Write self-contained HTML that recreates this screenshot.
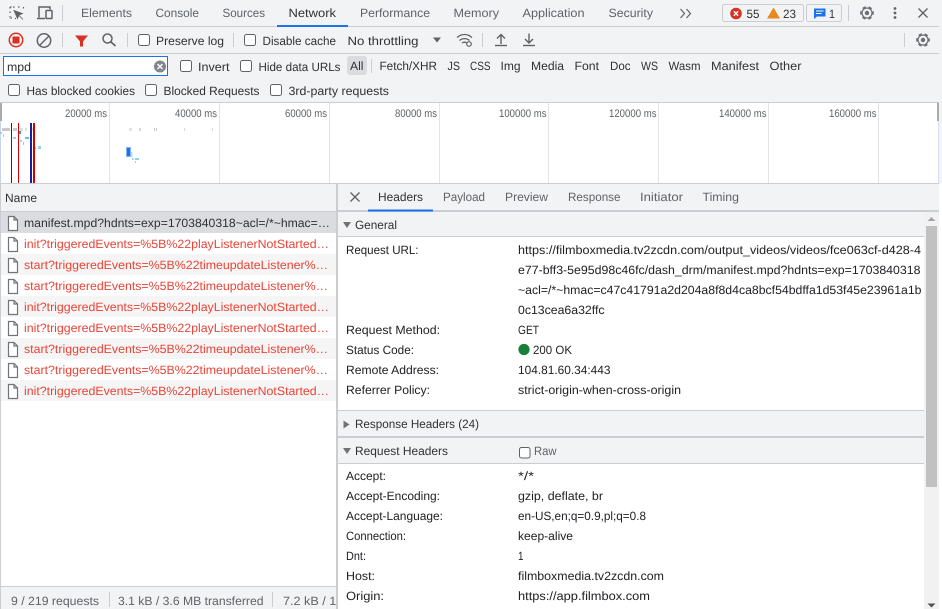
<!DOCTYPE html>
<html><head><meta charset="utf-8"><title>Network</title>
<style>
html,body{margin:0;padding:0;background:#fff;width:942px;height:609px;overflow:hidden}
svg{display:block}
text{font-family:"Liberation Sans",sans-serif;font-size:12px;fill:#3c4043;white-space:pre;text-rendering:geometricPrecision}
.t{fill:#5f6368}
.a{fill:#202124}
.k{fill:#303134}
.r{fill:#ea4335}
.o{font-size:11px;fill:#5f6368}
.cb{fill:#fff;stroke:#5f6368;stroke-width:1}
.ln{stroke:#cacdd1;stroke-width:1}
.ic{fill:none;stroke:#5f6368;stroke-width:1.5}
</style></head><body>
<svg width="942" height="609" viewBox="0 0 942 609" xmlns="http://www.w3.org/2000/svg">
<defs>
<g id="gear"><circle r="5" fill="none" stroke="#6a6e73" stroke-width="1.200"/><circle r="6.100" fill="none" stroke="#6a6e73" stroke-width="1.500" stroke-dasharray="3.400 3" transform="rotate(-16)"/><circle r="2.200" fill="#6a6e73"/></g>
<path id="file" d="M8.500 1.500h5.500l3.500 3.500v10.500h-9z M14 1.500v3.500h3.500" stroke="#70757a" stroke-width="1.200" fill="#fff"/>
<clipPath id="fc"><rect x="0" y="587" width="336" height="22"/></clipPath>
</defs>

<rect width="942" height="184" fill="#f1f3f4"/>
<rect x="939" y="184" width="3" height="425" fill="#fff"/>

<!-- top tab bar -->
<line x1="0" y1="26.500" x2="939" y2="26.500" class="ln"/>
<rect x="277" y="25" width="71" height="2" fill="#1a73e8"/>
<path d="M10 7h1.500M13 7h2M18 7h2.500M23.500 7v1.500M10 7v2M10 11.500v2M10 16v2h2M15 18.500h1" stroke="#5f6368" stroke-width="1.200" fill="none" stroke-dasharray="1.500 1"/>
<path d="M14 10.500l8.500 3-3.500 1.500-1.500 3.500zM18.500 15l4.500 4.500" fill="#5f6368" stroke="#5f6368" stroke-width=".8"/>
<path d="M37 18.500h8M39 17.500v-10.500h11v2.500" class="ic" stroke-width="1.300"/>
<rect x="46" y="10.500" width="6" height="8" rx=".8" class="ic" stroke-width="1.300"/>
<line x1="62.500" y1="5" x2="62.500" y2="21" class="ln"/>
<text x="81" y="17" class="t" textLength="51" lengthAdjust="spacingAndGlyphs">Elements</text>
<text x="155.500" y="17" class="t" textLength="43.500" lengthAdjust="spacingAndGlyphs">Console</text>
<text x="222.500" y="17" class="t" textLength="42.500" lengthAdjust="spacingAndGlyphs">Sources</text>
<text x="288.500" y="17" class="k" textLength="47.500" lengthAdjust="spacingAndGlyphs">Network</text>
<text x="360" y="17" class="t" textLength="70" lengthAdjust="spacingAndGlyphs">Performance</text>
<text x="453.500" y="17" class="t" textLength="45.500" lengthAdjust="spacingAndGlyphs">Memory</text>
<text x="522.500" y="17" class="t" textLength="62" lengthAdjust="spacingAndGlyphs">Application</text>
<text x="608.500" y="17" class="t" textLength="44.500" lengthAdjust="spacingAndGlyphs">Security</text>
<path d="M680.500 9l4 4.500-4 4.500M686.500 9l4 4.500-4 4.500" fill="none" stroke="#5f6368" stroke-width="1.200"/>

<rect x="722.500" y="4.500" width="81" height="17" rx="2" fill="#f1f3f4" stroke="#cacdd1"/>
<circle cx="736" cy="13.500" r="5.800" fill="#d93025"/>
<path d="M733.800 11.300l4.400 4.400M738.200 11.300l-4.400 4.400" stroke="#fff" stroke-width="1.400"/>
<text x="746.500" y="18" class="k" textLength="13" lengthAdjust="spacingAndGlyphs">55</text>
<path d="M773.500 7.500l6.500 11h-13z" fill="#e8891c"/>
<text x="783" y="18" class="k" textLength="13" lengthAdjust="spacingAndGlyphs">23</text>
<rect x="806.500" y="4.500" width="35" height="17" rx="2" fill="#f1f3f4" stroke="#cacdd1"/>
<path d="M814 8.500h11.500v8h-8.500l-3 2.500z" fill="#1a73e8"/>
<path d="M816 11h7.500M816 13.500h5.500" stroke="#fff" stroke-width="1"/>
<text x="829" y="18" class="k" textLength="6" lengthAdjust="spacingAndGlyphs">1</text>
<line x1="848.500" y1="5" x2="848.500" y2="21" class="ln"/>
<use href="#gear" x="867" y="13"/>
<circle cx="895" cy="8.500" r="1.400" fill="#5f6368"/><circle cx="895" cy="13" r="1.400" fill="#5f6368"/><circle cx="895" cy="17.500" r="1.400" fill="#5f6368"/>
<path d="M918.500 8.500l9 9M927.500 8.500l-9 9" stroke="#5f6368" stroke-width="1.300"/>

<!-- toolbar -->
<line x1="0" y1="53.500" x2="939" y2="53.500" class="ln"/>
<circle cx="16" cy="40" r="6.700" fill="none" stroke="#d93025" stroke-width="1.500"/>
<rect x="12.500" y="36.500" width="7" height="7" rx="1" fill="#d93025"/>
<circle cx="44" cy="40.500" r="6.700" fill="none" stroke="#5f6368" stroke-width="1.500"/>
<line x1="39.500" y1="45.500" x2="49" y2="36" stroke="#5f6368" stroke-width="1.500"/>
<line x1="62.500" y1="33" x2="62.500" y2="47" class="ln"/>
<path d="M75 35.500h13l-5 6v5h-3v-5z" fill="#d93025"/>
<circle cx="107.500" cy="38.500" r="4.500" fill="none" stroke="#5f6368" stroke-width="1.500"/>
<line x1="111" y1="42" x2="115.500" y2="46" stroke="#5f6368" stroke-width="1.700"/>
<line x1="127.500" y1="33" x2="127.500" y2="47" class="ln"/>
<rect x="138.500" y="34.500" width="11" height="11" rx="2" class="cb"/>
<text x="156" y="45" class="k" textLength="68" lengthAdjust="spacingAndGlyphs">Preserve log</text>
<line x1="233.500" y1="33" x2="233.500" y2="47" class="ln"/>
<rect x="244.500" y="34.500" width="11" height="11" rx="2" class="cb"/>
<text x="262.500" y="45" class="k" textLength="73.500" lengthAdjust="spacingAndGlyphs">Disable cache</text>
<text x="347.500" y="45" class="k" textLength="71" lengthAdjust="spacingAndGlyphs">No throttling</text>
<path d="M433 37.500h8l-4 5z" fill="#5f6368"/>
<path d="M457 37.500c4.500-4 10.500-4 15 0M459.500 40.500c3-2.500 7-2.500 10 0M462 43c1.500-1 3.200-1 4.500-.2" fill="none" stroke="#5f6368" stroke-width="1.300"/>
<circle cx="469" cy="44" r="2.300" fill="none" stroke="#5f6368" stroke-width="1.200"/>
<line x1="482.500" y1="33" x2="482.500" y2="47" class="ln"/>
<path d="M501 44v-9M497 38.500l4-4 4 4" fill="none" stroke="#5f6368" stroke-width="1.400"/><line x1="495" y1="45.500" x2="507" y2="45.500" stroke="#5f6368" stroke-width="1.400"/>
<path d="M529 33.500v9M525 39l4 4 4-4" fill="none" stroke="#5f6368" stroke-width="1.400"/><line x1="523" y1="45.500" x2="535" y2="45.500" stroke="#5f6368" stroke-width="1.400"/>
<line x1="904.500" y1="33" x2="904.500" y2="47" class="ln"/>
<use href="#gear" x="923" y="40"/>

<!-- filter row -->
<rect x="3.500" y="56.500" width="164" height="19" fill="#fff" stroke="#1a73e8"/>
<text x="7" y="71" class="k" textLength="24" lengthAdjust="spacingAndGlyphs">mpd</text>
<circle cx="160" cy="66.500" r="6" fill="#80868b"/>
<path d="M157.500 64l5 5M162.500 64l-5 5" stroke="#fff" stroke-width="1.400"/>
<rect x="180.500" y="60.500" width="11" height="11" rx="2" class="cb"/>
<text x="198" y="71" class="k" textLength="31.500" lengthAdjust="spacingAndGlyphs">Invert</text>
<rect x="240.500" y="60.500" width="11" height="11" rx="2" class="cb"/>
<text x="258.500" y="71" class="k" textLength="82" lengthAdjust="spacingAndGlyphs">Hide data URLs</text>
<rect x="347" y="56" width="20" height="19" rx="3" fill="#dadce0"/>
<text x="350" y="70" class="k" textLength="13.500" lengthAdjust="spacingAndGlyphs">All</text>
<line x1="371.500" y1="59" x2="371.500" y2="73" class="ln"/>
<text x="379.500" y="70" class="k" textLength="57.500" lengthAdjust="spacingAndGlyphs">Fetch/XHR</text>
<text x="447.500" y="70" class="k" textLength="12.500" lengthAdjust="spacingAndGlyphs">JS</text>
<text x="470" y="70" class="k" textLength="20.500" lengthAdjust="spacingAndGlyphs">CSS</text>
<text x="500.500" y="70" class="k" textLength="20" lengthAdjust="spacingAndGlyphs">Img</text>
<text x="531" y="70" class="k" textLength="33" lengthAdjust="spacingAndGlyphs">Media</text>
<text x="574.500" y="70" class="k" textLength="24.500" lengthAdjust="spacingAndGlyphs">Font</text>
<text x="610" y="70" class="k" textLength="20.500" lengthAdjust="spacingAndGlyphs">Doc</text>
<text x="641" y="70" class="k" textLength="17" lengthAdjust="spacingAndGlyphs">WS</text>
<text x="668.500" y="70" class="k" textLength="32" lengthAdjust="spacingAndGlyphs">Wasm</text>
<text x="711" y="70" class="k" textLength="48" lengthAdjust="spacingAndGlyphs">Manifest</text>
<text x="769.500" y="70" class="k" textLength="32" lengthAdjust="spacingAndGlyphs">Other</text>

<!-- row 3 -->
<rect x="8.500" y="84.500" width="11" height="11" rx="2" class="cb"/>
<text x="26.500" y="95" class="k" textLength="108.500" lengthAdjust="spacingAndGlyphs">Has blocked cookies</text>
<rect x="145.500" y="84.500" width="11" height="11" rx="2" class="cb"/>
<text x="163.500" y="95" class="k" textLength="96" lengthAdjust="spacingAndGlyphs">Blocked Requests</text>
<rect x="270.500" y="84.500" width="11" height="11" rx="2" class="cb"/>
<text x="288.500" y="95" class="k" textLength="100.500" lengthAdjust="spacingAndGlyphs">3rd-party requests</text>
<line x1="0" y1="102.500" x2="939" y2="102.500" class="ln"/>

<!-- overview -->
<rect x="0" y="103" width="939" height="80" fill="#fff"/>
<g stroke="#e3e3e3" stroke-width="1">
<line x1="109.500" y1="103" x2="109.500" y2="183"/><line x1="219.500" y1="103" x2="219.500" y2="183"/><line x1="329.500" y1="103" x2="329.500" y2="183"/><line x1="439.500" y1="103" x2="439.500" y2="183"/><line x1="548.500" y1="103" x2="548.500" y2="183"/><line x1="658.500" y1="103" x2="658.500" y2="183"/><line x1="768.500" y1="103" x2="768.500" y2="183"/><line x1="878.500" y1="103" x2="878.500" y2="183"/>
</g>
<text x="65" y="117" class="o" textLength="42" lengthAdjust="spacingAndGlyphs">20000 ms</text>
<text x="175" y="117" class="o" textLength="42" lengthAdjust="spacingAndGlyphs">40000 ms</text>
<text x="285" y="117" class="o" textLength="42" lengthAdjust="spacingAndGlyphs">60000 ms</text>
<text x="395" y="117" class="o" textLength="42" lengthAdjust="spacingAndGlyphs">80000 ms</text>
<text x="499" y="117" class="o" textLength="47.500" lengthAdjust="spacingAndGlyphs">100000 ms</text>
<text x="609" y="117" class="o" textLength="47.500" lengthAdjust="spacingAndGlyphs">120000 ms</text>
<text x="719" y="117" class="o" textLength="47.500" lengthAdjust="spacingAndGlyphs">140000 ms</text>
<text x="829" y="117" class="o" textLength="47.500" lengthAdjust="spacingAndGlyphs">160000 ms</text>
<rect x="0" y="103" width="2" height="18" fill="#aaa"/>
<rect x="0" y="121" width="1" height="62" fill="#c6d5ec"/>
<rect x="937" y="103" width="2" height="18" fill="#aaa"/>
<rect x="938" y="121" width="1" height="62" fill="#d5e0f2"/>
<g fill="#c9c9c9">
<rect x="2" y="128" width="8" height="3"/><rect x="13" y="128" width="4" height="3"/><rect x="20" y="128" width="3" height="3" opacity=".6"/><rect x="25" y="128" width="2" height="3" opacity=".6"/><rect x="30" y="128" width="3" height="3" opacity=".6"/>
<rect x="129" y="128" width="3" height="3" opacity=".5"/><rect x="139" y="128" width="2" height="3" opacity=".7"/><rect x="154" y="128" width="1" height="3"/><rect x="156" y="128" width="1" height="3"/><rect x="184" y="128" width="1" height="3" opacity=".7"/><rect x="212" y="128" width="1" height="3" opacity=".7"/>
</g>
<g fill="#8fd3f0">
<rect x="0" y="132" width="2" height="2"/><rect x="3" y="134" width="1" height="3"/><rect x="13" y="137" width="3" height="2"/><rect x="19" y="131" width="2" height="3" fill="#2a9be8"/><rect x="20" y="140" width="2" height="2"/><rect x="23" y="142" width="1" height="3"/><rect x="25" y="137" width="4" height="2" fill="#5cc0ee"/><rect x="35" y="147" width="1" height="2"/><rect x="38" y="146" width="3" height="3"/>
<rect x="131" y="152" width="1.500" height="5" opacity=".7"/><rect x="132" y="158" width="1.500" height="2"/><rect x="135" y="158" width="4" height="2"/><rect x="135" y="161" width="1" height="2"/>
</g>
<rect x="126" y="147" width="5" height="10" fill="#8ab6f5"/>
<rect x="127" y="148" width="3" height="8" fill="#1a73e8"/>
<rect x="11" y="123" width="1" height="60" fill="#1c1ca0"/>
<rect x="18" y="123" width="1" height="60" fill="#dd0000"/>
<rect x="30" y="123" width="2" height="60" fill="#1c1ca0"/>
<rect x="33" y="123" width="2" height="60" fill="#cc0000"/>
<line x1="0" y1="183.500" x2="939" y2="183.500" class="ln"/>

<!-- left pane -->
<rect x="0" y="184" width="336" height="27" fill="#f1f3f4"/>
<line x1="0" y1="211.500" x2="336" y2="211.500" class="ln"/>
<text x="5" y="202" class="k" textLength="32" lengthAdjust="spacingAndGlyphs">Name</text>
<rect x="0" y="212" width="336" height="21" fill="#dadce0"/>
<rect x="0" y="254" width="336" height="21" fill="#f5f5f5"/>
<rect x="0" y="296" width="336" height="21" fill="#f5f5f5"/>
<rect x="0" y="338" width="336" height="21" fill="#f5f5f5"/>
<rect x="0" y="380" width="336" height="21" fill="#f5f5f5"/>
<use href="#file" y="215"/><use href="#file" y="236"/><use href="#file" y="257"/><use href="#file" y="278"/><use href="#file" y="299"/><use href="#file" y="320"/><use href="#file" y="341"/><use href="#file" y="362"/><use href="#file" y="383"/>
<text x="24" y="227" class="k" textLength="306" lengthAdjust="spacingAndGlyphs">manifest.mpd?hdnts=exp=1703840318~acl=/*~hmac=…</text>
<text x="24" y="248" class="r" textLength="305" lengthAdjust="spacingAndGlyphs">init?triggeredEvents=%5B%22playListenerNotStarted…</text>
<text x="24" y="269" class="r" textLength="304" lengthAdjust="spacingAndGlyphs">start?triggeredEvents=%5B%22timeupdateListener%…</text>
<text x="24" y="290" class="r" textLength="304" lengthAdjust="spacingAndGlyphs">start?triggeredEvents=%5B%22timeupdateListener%…</text>
<text x="24" y="311" class="r" textLength="305" lengthAdjust="spacingAndGlyphs">init?triggeredEvents=%5B%22playListenerNotStarted…</text>
<text x="24" y="332" class="r" textLength="305" lengthAdjust="spacingAndGlyphs">init?triggeredEvents=%5B%22playListenerNotStarted…</text>
<text x="24" y="353" class="r" textLength="304" lengthAdjust="spacingAndGlyphs">start?triggeredEvents=%5B%22timeupdateListener%…</text>
<text x="24" y="374" class="r" textLength="304" lengthAdjust="spacingAndGlyphs">start?triggeredEvents=%5B%22timeupdateListener%…</text>
<text x="24" y="395" class="r" textLength="305" lengthAdjust="spacingAndGlyphs">init?triggeredEvents=%5B%22playListenerNotStarted…</text>

<rect x="0" y="587" width="336" height="22" fill="#f1f3f4"/>
<line x1="0" y1="586.500" x2="336" y2="586.500" class="ln"/>
<text x="11" y="605" class="t" textLength="88" lengthAdjust="spacingAndGlyphs">9 / 219 requests</text>
<line x1="109.500" y1="592" x2="109.500" y2="607" class="ln"/>
<text x="118" y="605" class="t" textLength="145.500" lengthAdjust="spacingAndGlyphs">3.1 kB / 3.6 MB transferred</text>
<line x1="272.500" y1="592" x2="272.500" y2="607" class="ln"/>
<text x="283" y="605" class="t" clip-path="url(#fc)" textLength="152" lengthAdjust="spacingAndGlyphs">7.2 kB / 14.6 MB resources</text>

<rect x="336" y="184" width="2" height="425" fill="#cacdd1"/>
<rect x="0" y="184" width="1" height="425" fill="#cacdd1"/>

<!-- right pane -->
<rect x="338" y="184" width="601" height="26" fill="#f1f3f4"/>
<rect x="338" y="210" width="601" height="2" fill="#cacdd1"/>
<rect x="368" y="209.500" width="65" height="2" fill="#1a73e8"/>
<path d="M350.500 192.500l9 9M359.500 192.500l-9 9" stroke="#5f6368" stroke-width="1.300"/>
<text x="378" y="201" class="k" textLength="45" lengthAdjust="spacingAndGlyphs">Headers</text>
<text x="443" y="201" class="t" textLength="42" lengthAdjust="spacingAndGlyphs">Payload</text>
<text x="505" y="201" class="t" textLength="43" lengthAdjust="spacingAndGlyphs">Preview</text>
<text x="568" y="201" class="t" textLength="52.500" lengthAdjust="spacingAndGlyphs">Response</text>
<text x="640" y="201" class="t" textLength="43" lengthAdjust="spacingAndGlyphs">Initiator</text>
<text x="702.500" y="201" class="t" textLength="36.500" lengthAdjust="spacingAndGlyphs">Timing</text>

<rect x="338" y="212" width="586" height="24" fill="#f1f3f4"/>
<line x1="338" y1="236.500" x2="924" y2="236.500" class="ln"/>
<path d="M343 222h8l-4 6z" fill="#727272"/>
<text x="355" y="229" class="k" textLength="42" lengthAdjust="spacingAndGlyphs">General</text>

<text x="346" y="254" class="a" textLength="72.500" lengthAdjust="spacingAndGlyphs">Request URL:</text>
<text x="518" y="254" class="a" textLength="403" lengthAdjust="spacingAndGlyphs">https://filmboxmedia.tv2zcdn.com/output_videos/videos/fce063cf-d428-4</text>
<text x="518" y="274" class="a" textLength="402.500" lengthAdjust="spacingAndGlyphs">e77-bff3-5e95d98c46fc/dash_drm/manifest.mpd?hdnts=exp=1703840318</text>
<text x="518" y="294" class="a" textLength="403.500" lengthAdjust="spacingAndGlyphs">~acl=/*~hmac=c47c41791a2d204a8f8d4ca8bcf54bdffa1d53f45e23961a1b</text>
<text x="518" y="314" class="a" textLength="86.500" lengthAdjust="spacingAndGlyphs">0c13cea6a32ffc</text>
<text x="346" y="334" class="a" textLength="94" lengthAdjust="spacingAndGlyphs">Request Method:</text>
<text x="518" y="334" class="a" textLength="21" lengthAdjust="spacingAndGlyphs">GET</text>
<text x="346" y="354" class="a" textLength="68" lengthAdjust="spacingAndGlyphs">Status Code:</text>
<circle cx="524" cy="349.500" r="5.600" fill="#188038"/>
<text x="533" y="354" class="a" textLength="39" lengthAdjust="spacingAndGlyphs">200 OK</text>
<text x="346" y="374" class="a" textLength="93" lengthAdjust="spacingAndGlyphs">Remote Address:</text>
<text x="518" y="374" class="a" textLength="92.500" lengthAdjust="spacingAndGlyphs">104.81.60.34:443</text>
<text x="346" y="394" class="a" textLength="84" lengthAdjust="spacingAndGlyphs">Referrer Policy:</text>
<text x="518" y="394" class="a" textLength="163" lengthAdjust="spacingAndGlyphs">strict-origin-when-cross-origin</text>

<line x1="338" y1="410.500" x2="924" y2="410.500" class="ln"/>
<rect x="338" y="411" width="586" height="25" fill="#f1f3f4"/>
<path d="M343.500 420.500l6 4-6 4z" fill="#727272"/>
<text x="355" y="428" class="k" textLength="124" lengthAdjust="spacingAndGlyphs">Response Headers (24)</text>
<rect x="338" y="436" width="586" height="2" fill="#cacdd1"/>
<rect x="338" y="438" width="586" height="25" fill="#f1f3f4"/>
<line x1="338" y1="463.500" x2="924" y2="463.500" class="ln"/>
<path d="M343 448h8l-4 6z" fill="#727272"/>
<text x="355" y="455" class="k" textLength="93" lengthAdjust="spacingAndGlyphs">Request Headers</text>
<rect x="519.500" y="447.500" width="10.500" height="10.500" rx="2" class="cb"/>
<text x="534" y="455" class="t" textLength="22.500" lengthAdjust="spacingAndGlyphs">Raw</text>

<text x="346" y="480" class="a" textLength="40" lengthAdjust="spacingAndGlyphs">Accept:</text>
<text x="518" y="480" class="a" textLength="16" lengthAdjust="spacingAndGlyphs">*/*</text>
<text x="346" y="500" class="a" textLength="94" lengthAdjust="spacingAndGlyphs">Accept-Encoding:</text>
<text x="518" y="500" class="a" textLength="85" lengthAdjust="spacingAndGlyphs">gzip, deflate, br</text>
<text x="346" y="520" class="a" textLength="97" lengthAdjust="spacingAndGlyphs">Accept-Language:</text>
<text x="518" y="520" class="a" textLength="128" lengthAdjust="spacingAndGlyphs">en-US,en;q=0.9,pl;q=0.8</text>
<text x="346" y="540" class="a" textLength="60" lengthAdjust="spacingAndGlyphs">Connection:</text>
<text x="518" y="540" class="a" textLength="55" lengthAdjust="spacingAndGlyphs">keep-alive</text>
<text x="346" y="560" class="a" textLength="20" lengthAdjust="spacingAndGlyphs">Dnt:</text>
<text x="518" y="560" class="a" textLength="5.500" lengthAdjust="spacingAndGlyphs">1</text>
<text x="346" y="580" class="a" textLength="29" lengthAdjust="spacingAndGlyphs">Host:</text>
<text x="518" y="580" class="a" textLength="146" lengthAdjust="spacingAndGlyphs">filmboxmedia.tv2zcdn.com</text>
<text x="346" y="600" class="a" textLength="38" lengthAdjust="spacingAndGlyphs">Origin:</text>
<text x="518" y="600" class="a" textLength="132" lengthAdjust="spacingAndGlyphs">https://app.filmbox.com</text>

<!-- scrollbar -->
<rect x="924" y="212" width="15" height="397" fill="#f1f1f1"/>
<rect x="926" y="226" width="11" height="261" fill="#c1c1c1"/>
<path d="M931.500 217l4 4h-8z" fill="#a3a3a3"/>
<path d="M927.500 603.500h8l-4 4z" fill="#505050"/>
</svg>
</body></html>
